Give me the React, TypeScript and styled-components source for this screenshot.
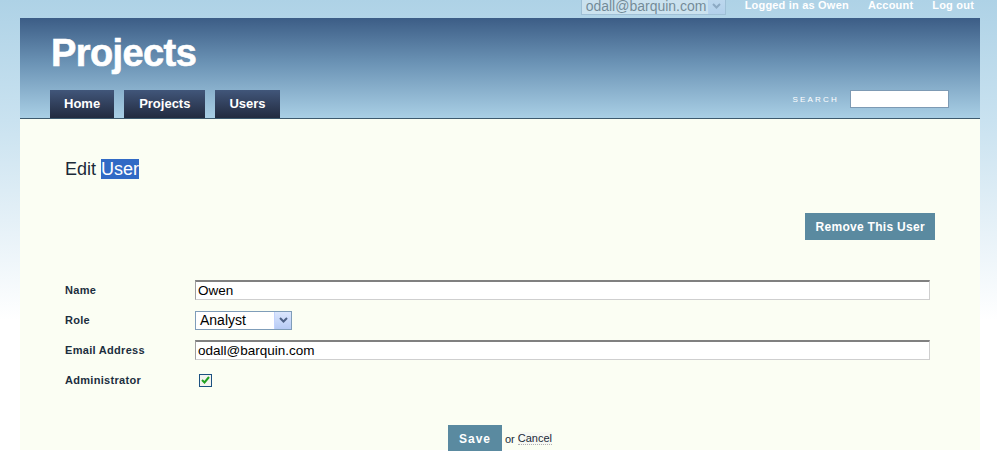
import React from 'react';
import styled, {createGlobalStyle} from 'styled-components';

const GlobalStyle = createGlobalStyle`
  html, body {
    margin: 0;
    padding: 0;
  }
  body {
    font-family: "Liberation Sans", Arial, sans-serif;
    background: linear-gradient(to bottom, #aed2e6 0px, #c9e2f0 120px, #e4f0f7 220px, #ffffff 320px);
    min-height: 451px;
  }
`;

const Page = styled.div`
  width: 960px;
  margin-left: 20px;
`;

const TopBar = styled.div`
  height: 18px;
  display: flex;
  align-items: flex-start;
  justify-content: flex-end;
  padding-right: 6px;
  overflow: hidden;
`;

const FakeSelect = styled.div<{ w: number; faded?: boolean }>`
  width: ${({ w }) => w}px;
  height: 19px;
  box-sizing: border-box;
  border: 1px solid #7f9db9;
  background: #fff;
  display: flex;
  align-items: center;
  font-size: 14px;
  color: #000;
  opacity: ${({ faded }) => (faded ? 0.35 : 1)};
`;

const TopSelect = styled(FakeSelect)`
  height: 18px;
  margin-top: -3px;
`;

const SelectText = styled.span`
  flex: 1;
  padding-left: 4px;
  white-space: nowrap;
  overflow: hidden;
`;

const SelectArrow = styled.span`
  width: 16px;
  height: 100%;
  background: linear-gradient(to bottom, #dbe6fd, #b7cbf5);
  border-left: 1px solid #c3d3fd;
  display: flex;
  align-items: center;
  justify-content: center;
`;

const TopLink = styled.a`
  color: #fff;
  font-weight: bold;
  font-size: 11px;
  letter-spacing: 0.2px;
  text-decoration: none;
  margin-left: 19px;
  line-height: 11px;
`;

const Header = styled.div`
  height: 101px;
  box-sizing: border-box;
  background: linear-gradient(to bottom, #3c5d86 0%, #6b93b5 45%, #a9cfe5 100%);
  border-bottom: 1px solid #3d5a6e;
  display: flex;
  flex-direction: column;
  justify-content: space-between;
  padding: 14px 31px 0 30px;
`;

const Title = styled.h1`
  margin: 0 0 0 1px;
  color: #fff;
  font-size: 38px;
  font-weight: 900;
  letter-spacing: -0.6px;
  line-height: 42px;
  -webkit-text-stroke: 0.6px #fff;
`;

const NavRow = styled.div`
  display: flex;
  align-items: flex-end;
  justify-content: space-between;
`;

const Tabs = styled.div`
  display: flex;
  gap: 10px;
`;

const Tab = styled.a<{ px: number }>`
  display: block;
  height: 28px;
  line-height: 28px;
  padding: 0 ${({ px }) => px}px;
  color: #fff;
  font-size: 13px;
  font-weight: bold;
  text-decoration: none;
  background: linear-gradient(to bottom, #41567a, #222b3f);
`;

const Search = styled.div`
  display: flex;
  align-items: center;
  gap: 11px;
  margin-bottom: 10px;
`;

const SearchLabel = styled.span`
  color: #fff;
  font-size: 8px;
  letter-spacing: 2.2px;
`;

const SearchInput = styled.div`
  width: 99px;
  height: 18px;
  box-sizing: border-box;
  background: #fff;
  border: 1px solid #7d9ab4;
`;

const Content = styled.div`
  background: #fbfef3;
  height: 331px;
  padding: 40px 45px 0 45px;
  box-sizing: border-box;
`;

const Heading = styled.h2`
  margin: 0;
  font-size: 18px;
  font-weight: normal;
  color: #1b2a38;
  line-height: 21px;
`;

const Highlight = styled.span`
  background: #316ac5;
  color: #fff;
`;

const ActionRow = styled.div`
  display: flex;
  justify-content: flex-end;
  margin-top: 33px;
`;

const ActionButton = styled.button`
  background: #5a8aa0;
  color: #fff;
  border: none;
  font-family: "Liberation Sans", Arial, sans-serif;
  font-weight: bold;
  font-size: 12px;
  letter-spacing: 0.3px;
  height: 27px;
  padding: 0 10px;
  cursor: pointer;
`;

const Form = styled.div`
  margin-top: 35px;
  padding-right: 5px;
  display: flex;
  flex-direction: column;
`;

const Row = styled.div`
  display: grid;
  grid-template-columns: 130px 1fr;
  align-items: center;
  height: 30px;
`;

const Label = styled.label`
  font-size: 11px;
  font-weight: bold;
  color: #1c2e3e;
  letter-spacing: 0.3px;
`;

const TextInput = styled.div`
  height: 20px;
  box-sizing: border-box;
  background: #fff;
  border: 1px solid #cfcfcf;
  border-top: 2px solid #808080;
  border-left: 1px solid #a0a0a0;
  font-size: 13.5px;
  line-height: 17px;
  padding-left: 2px;
  color: #000;
`;

const CheckBox = styled.span`
  width: 13px;
  height: 13px;
  box-sizing: border-box;
  border: 1px solid #1c5180;
  background: #f4f4f0;
  margin-left: 4px;
  display: flex;
  align-items: center;
  justify-content: center;
`;

const Footer = styled.div`
  display: flex;
  justify-content: center;
  align-items: center;
  margin-top: 30px;
  font-size: 11px;
  color: #1b2a38;
`;

const SaveButton = styled(ActionButton)`
  padding: 0 11px;
  letter-spacing: 1px;
  margin-right: 3px;
`;

const CancelLink = styled.a`
  margin-left: 3px;
  color: #1b2a38;
  text-decoration: none;
  background: #f6f8f2;
  border-bottom: 1px dotted #b0b0b0;
`;

const Chevron = ({ color = '#4d6185' }: { color?: string }) => (
  <svg width="9" height="6" viewBox="0 0 9 6">
    <path d="M1 1 L4.5 4.5 L8 1" fill="none" stroke={color} strokeWidth="2" />
  </svg>
);

export default function App() {
  return (
    <>
      <GlobalStyle />
      <Page>
        <TopBar>
          <TopSelect w={145} faded>
            <SelectText>odall@barquin.com</SelectText>
            <SelectArrow><Chevron /></SelectArrow>
          </TopSelect>
          <TopLink href="#">Logged in as Owen</TopLink>
          <TopLink href="#">Account</TopLink>
          <TopLink href="#">Log out</TopLink>
        </TopBar>
        <Header>
          <Title>Projects</Title>
          <NavRow>
            <Tabs>
              <Tab px={14} href="#">Home</Tab>
              <Tab px={15} href="#">Projects</Tab>
              <Tab px={14} href="#">Users</Tab>
            </Tabs>
            <Search>
              <SearchLabel>SEARCH</SearchLabel>
              <SearchInput />
            </Search>
          </NavRow>
        </Header>
        <Content>
          <Heading>Edit <Highlight>User</Highlight></Heading>
          <ActionRow>
            <ActionButton>Remove This User</ActionButton>
          </ActionRow>
          <Form>
            <Row>
              <Label>Name</Label>
              <TextInput>Owen</TextInput>
            </Row>
            <Row>
              <Label>Role</Label>
              <FakeSelect w={97}>
                <SelectText>Analyst</SelectText>
                <SelectArrow><Chevron /></SelectArrow>
              </FakeSelect>
            </Row>
            <Row>
              <Label>Email Address</Label>
              <TextInput>odall@barquin.com</TextInput>
            </Row>
            <Row>
              <Label>Administrator</Label>
              <CheckBox>
                <svg width="9" height="8" viewBox="0 0 9 8">
                  <path d="M1 4 L3.5 6.5 L8 1" fill="none" stroke="#21a121" strokeWidth="2" />
                </svg>
              </CheckBox>
            </Row>
          </Form>
          <Footer>
            <SaveButton>Save</SaveButton>
            or <CancelLink href="#">Cancel</CancelLink>
          </Footer>
        </Content>
      </Page>
    </>
  );
}
